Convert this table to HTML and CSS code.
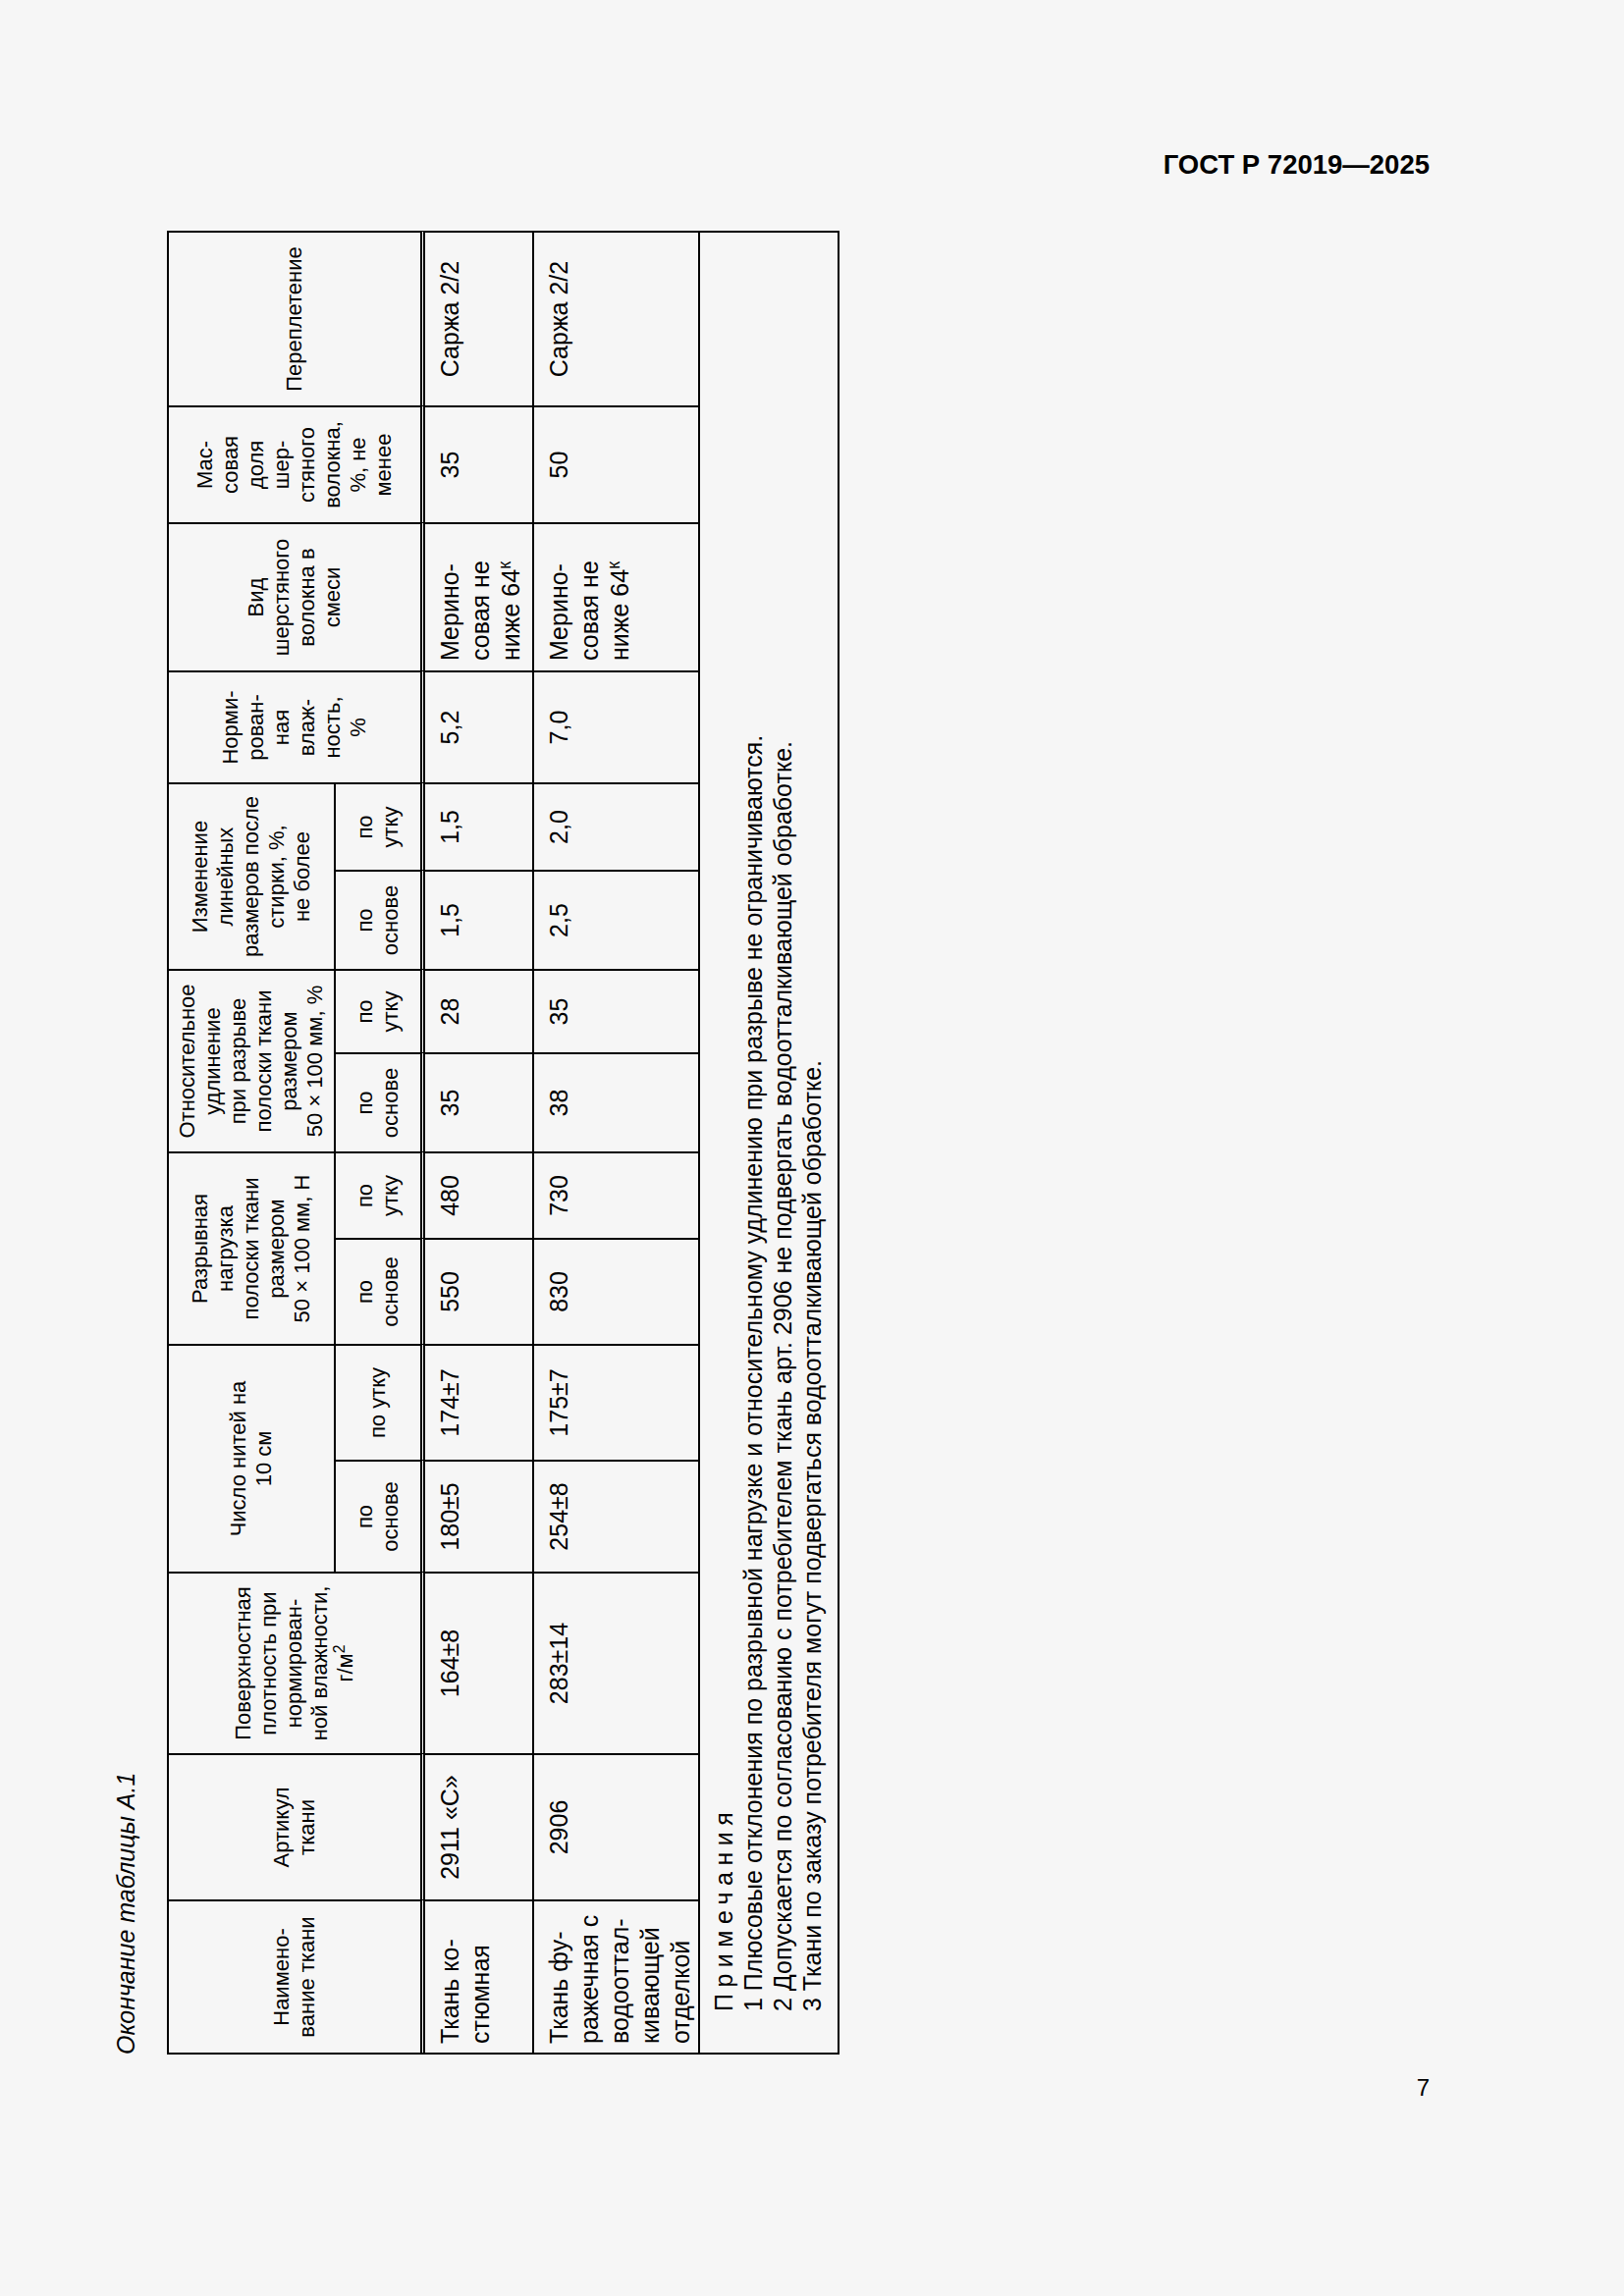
FILE: index.html
```html
<!DOCTYPE html>
<html lang="ru">
<head>
<meta charset="utf-8">
<title>ГОСТ Р 72019—2025</title>
<link rel="stylesheet" href="styles.css">
</head>
<body>
<div class="page">
  <div class="doc-code">ГОСТ Р 72019—2025</div>
  <div class="frame">
    <div class="rot">
      <div class="caption">Окончание таблицы А.1</div>
      <div class="grid">
        <div class="c h rs"><span>Наимено-<br>вание ткани</span></div>
        <div class="c h rs"><span>Артикул<br>ткани</span></div>
        <div class="c h rs"><span>Поверхностная<br>плотность при<br>нормирован-<br>ной влажности,<br>г/м<sup>2</sup></span></div>
        <div class="c h cs grp"><span>Число нитей на<br>10 см</span></div>
        <div class="c h cs grp"><span>Разрывная<br>нагрузка<br>полоски ткани<br>размером<br>50 × 100 мм, Н</span></div>
        <div class="c h cs grp"><span>Относительное<br>удлинение<br>при разрыве<br>полоски ткани<br>размером<br>50 × 100 мм, %</span></div>
        <div class="c h cs grp"><span>Изменение<br>линейных<br>размеров после<br>стирки, %,<br>не более</span></div>
        <div class="c h rs"><span>Норми-<br>рован-<br>ная<br>влаж-<br>ность,<br>%</span></div>
        <div class="c h rs"><span>Вид<br>шерстяного<br>волокна в<br>смеси</span></div>
        <div class="c h rs"><span>Мас-<br>совая<br>доля<br>шер-<br>стяного<br>волокна,<br>%, не<br>менее</span></div>
        <div class="c h rs"><span>Переплетение</span></div>

        <div class="c h sub"><span>по<br>основе</span></div>
        <div class="c h sub"><span>по утку</span></div>
        <div class="c h sub"><span>по<br>основе</span></div>
        <div class="c h sub"><span>по<br>утку</span></div>
        <div class="c h sub"><span>по<br>основе</span></div>
        <div class="c h sub"><span>по<br>утку</span></div>
        <div class="c h sub"><span>по<br>основе</span></div>
        <div class="c h sub"><span>по<br>утку</span></div>

        <div class="c d l first">Ткань ко-<br>стюмная</div>
        <div class="c d">2911 «С»</div>
        <div class="c d">164±8</div>
        <div class="c d">180±5</div>
        <div class="c d">174±7</div>
        <div class="c d">550</div>
        <div class="c d">480</div>
        <div class="c d">35</div>
        <div class="c d">28</div>
        <div class="c d">1,5</div>
        <div class="c d">1,5</div>
        <div class="c d">5,2</div>
        <div class="c d l">Мерино-<br>совая не<br>ниже 64<sup>к</sup></div>
        <div class="c d">35</div>
        <div class="c d">Саржа 2/2</div>

        <div class="c d l first">Ткань фу-<br>ражечная с<br>водооттал-<br>кивающей<br>отделкой</div>
        <div class="c d">2906</div>
        <div class="c d">283±14</div>
        <div class="c d">254±8</div>
        <div class="c d">175±7</div>
        <div class="c d">830</div>
        <div class="c d">730</div>
        <div class="c d">38</div>
        <div class="c d">35</div>
        <div class="c d">2,5</div>
        <div class="c d">2,0</div>
        <div class="c d">7,0</div>
        <div class="c d l">Мерино-<br>совая не<br>ниже 64<sup>к</sup></div>
        <div class="c d">50</div>
        <div class="c d">Саржа 2/2</div>

        <div class="c notes">
          <div class="notes-title">Примечания</div>
          <div>1 Плюсовые отклонения по разрывной нагрузке и относительному удлинению при разрыве не ограничиваются.</div>
          <div>2 Допускается по согласованию с потребителем ткань арт. 2906 не подвергать водоотталкивающей обработке.</div>
          <div>3 Ткани по заказу потребителя могут подвергаться водоотталкивающей обработке.</div>
        </div>
      </div>
    </div>
  </div>
  <div class="page-num">7</div>
</div>
</body>
</html>
```

FILE: styles.css
```css
html, body {
  margin: 0;
  padding: 0;
  background: #f6f6f6;
}

body {
  font-family: "Liberation Sans", Arial, sans-serif;
  color: #000;
}

.page {
  width: 1654px;
  height: 2339px;
  box-sizing: border-box;
  padding-top: 153px;
  overflow: hidden;
}

.doc-code {
  margin-right: 198px;
  text-align: right;
  font-weight: bold;
  font-size: 27.5px;
  line-height: 30px;
}

.frame {
  width: 742px;
  height: 1858px;
  margin: 52px 0 0 113px;
}

.rot {
  width: 1858px;
  height: 742px;
  transform-origin: 0 0;
  transform: translateY(1858px) rotate(-90deg);
}

.caption {
  font-style: italic;
  font-size: 25px;
  line-height: 30px;
  height: 30px;
  margin-bottom: 27px;
}

.grid {
  display: grid;
  width: 1856px;
  grid-template-columns: 156px 149px 185px 114px 118px 108px 88px 101px 85px 101px 89px 114px 151px 119px 178px;
  grid-template-rows: 170px 91px 111px 169px 142px;
  border-top: 2px solid #000;
  border-left: 2px solid #000;
}

.c {
  box-sizing: border-box;
  border-right: 2px solid #000;
  border-bottom: 2px solid #000;
  min-width: 0;
}

.h {
  display: flex;
  align-items: center;
  justify-content: center;
  text-align: center;
  font-size: 22px;
  line-height: 26px;
}

.rs {
  grid-row: span 2;
  border-bottom: 5px double #000;
}

.cs {
  grid-column: span 2;
}

.sub {
  border-bottom: 5px double #000;
}

.d {
  text-align: center;
  font-size: 25px;
  line-height: 31px;
  padding-top: 10px;
  white-space: nowrap;
}

.d.l {
  text-align: left;
  padding-left: 10px;
}

.d.first {
  padding-left: 9px;
}

sup {
  font-size: 0.72em;
  line-height: 0;
  vertical-align: 0.5em;
}

.notes {
  grid-column: 1 / -1;
  padding: 9px 0 0 42px;
  font-size: 25px;
  line-height: 30px;
  white-space: nowrap;
}

.notes-title {
  letter-spacing: 6.5px;
}

.page-num {
  margin: 19px 198px 0 0;
  text-align: right;
  font-size: 24px;
  line-height: 30px;
}
```
